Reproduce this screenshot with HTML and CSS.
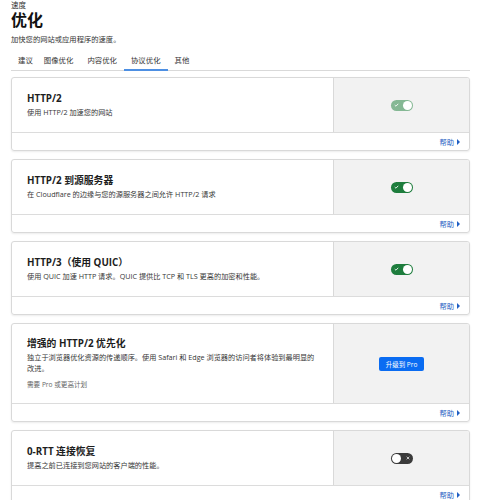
FILE: index.html
```html
<!DOCTYPE html>
<html lang="zh-CN">
  <head>
    <meta charset="utf-8">
    <title>优化</title>
    <link rel="stylesheet" href="styles.css">
  </head>
  <body>
    <header class="page-head">
      <div class="crumb">速度</div>
      <h1>优化</h1>
      <p class="lead">加快您的网站或应用程序的速度。</p>
    </header>

    <nav class="tabs">
      <a class="tab">建议</a>
      <a class="tab">图像优化</a>
      <a class="tab">内容优化</a>
      <a class="tab active">协议优化</a>
      <a class="tab">其他</a>
    </nav>

    <section class="card">
      <div class="card-main">
        <div class="card-text">
          <h2>HTTP/2</h2>
          <p>使用 HTTP/2 加速您的网站</p>
        </div>
        <div class="card-control">
          <span class="toggle on disabled">
            <svg class="tick" viewBox="0 0 6 5"><path d="M0.8 2.6 L2.3 4 L5.2 1" /></svg>
            <span class="knob"></span>
          </span>
        </div>
      </div>
      <div class="card-foot"><a class="help">帮助</a></div>
    </section>

    <section class="card">
      <div class="card-main">
        <div class="card-text">
          <h2>HTTP/2 到源服务器</h2>
          <p>在 Cloudflare 的边缘与您的源服务器之间允许 HTTP/2 请求</p>
        </div>
        <div class="card-control">
          <span class="toggle on">
            <svg class="tick" viewBox="0 0 6 5"><path d="M0.8 2.6 L2.3 4 L5.2 1" /></svg>
            <span class="knob"></span>
          </span>
        </div>
      </div>
      <div class="card-foot"><a class="help">帮助</a></div>
    </section>

    <section class="card">
      <div class="card-main">
        <div class="card-text">
          <h2>HTTP/3（使用 QUIC）</h2>
          <p>使用 QUIC 加速 HTTP 请求。QUIC 提供比 TCP 和 TLS 更高的加密和性能。</p>
        </div>
        <div class="card-control">
          <span class="toggle on">
            <svg class="tick" viewBox="0 0 6 5"><path d="M0.8 2.6 L2.3 4 L5.2 1" /></svg>
            <span class="knob"></span>
          </span>
        </div>
      </div>
      <div class="card-foot"><a class="help">帮助</a></div>
    </section>

    <section class="card">
      <div class="card-main">
        <div class="card-text">
          <h2>增强的 HTTP/2 优先化</h2>
          <p>独立于浏览器优化资源的传递顺序。使用 Safari 和 Edge 浏览器的访问者将体验到最明显的改进。</p>
          <p class="note">需要 Pro 或更高计划</p>
        </div>
        <div class="card-control">
          <button class="upgrade">升级到 Pro</button>
        </div>
      </div>
      <div class="card-foot"><a class="help">帮助</a></div>
    </section>

    <section class="card">
      <div class="card-main">
        <div class="card-text">
          <h2>0-RTT 连接恢复</h2>
          <p>提高之前已连接到您网站的客户端的性能。</p>
        </div>
        <div class="card-control">
          <span class="toggle off">
            <span class="knob"></span>
            <svg class="cross" viewBox="0 0 6 6"><path d="M1 1 L5 5 M5 1 L1 5" /></svg>
          </span>
        </div>
      </div>
      <div class="card-foot"><a class="help">帮助</a></div>
    </section>
  </body>
</html>
```

FILE: styles.css
```css
body {
  margin: 0;
  padding: 0 9px 20px 11px;
  background-color: #fff;
  color: #222;
  font-family: "Open Sans", "Noto Sans CJK SC", sans-serif;
}

.crumb {
  font-size: 7.5px;
  line-height: 10px;
  color: #333;
}

h1 {
  margin: 0;
  font-size: 16px;
  line-height: 20px;
  font-weight: 700;
  color: #111;
}

.lead {
  margin: 4px 0 0;
  font-size: 7.3px;
  line-height: 10px;
  color: #333;
}

.tabs {
  display: flex;
  margin-top: 6px;
  border-bottom: 1px solid #d9d9d9;
}

.tab {
  padding: 5px 7px 4px;
  font-size: 7.4px;
  line-height: 10px;
  color: #333;
  border-bottom: 2px solid transparent;
  margin-bottom: -1px;
}

.tab.active {
  border-bottom-color: #4d8fe3;
}

.tabs .tab:first-child {
  margin-right: -3px;
}

.card {
  margin-top: 6px;
  margin-bottom: 8px;
  border: 1px solid #d9d9d9;
  border-radius: 3px;
  box-shadow: 0 1px 2px rgba(0, 0, 0, 0.08);
  overflow: hidden;
}

.card-main {
  display: grid;
  grid-template-columns: 1fr 136px;
  min-height: 54px;
}

.card-text {
  padding: 13px 15px;
  align-self: center;
}

.card-text h2 {
  margin: 0;
  font-size: 9.8px;
  line-height: 13px;
  font-weight: 700;
  color: #1d1d1d;
}

.card-text p {
  margin: 2px 0 0;
  font-size: 7.2px;
  line-height: 11px;
  color: #363636;
}

.card-text p.note {
  margin-top: 6px;
  font-size: 6.6px;
  line-height: 10px;
  color: #666;
}

.card-control {
  display: flex;
  align-items: center;
  justify-content: center;
  background-color: #f2f2f2;
  border-left: 1px solid #d9d9d9;
}

.card-foot {
  display: flex;
  justify-content: flex-end;
  height: 17px;
  border-top: 1px solid #dcdcdc;
  padding-right: 9px;
}

.help {
  display: flex;
  align-items: center;
  font-size: 7.3px;
  color: #1f5fc4;
}

.help::after {
  content: "";
  margin-left: 3px;
  border-left: 3.5px solid #1f5fc4;
  border-top: 3px solid transparent;
  border-bottom: 3px solid transparent;
}

.toggle {
  display: flex;
  align-items: center;
  justify-content: space-between;
  width: 22px;
  height: 11px;
  padding: 0 1px 0 3px;
  box-sizing: border-box;
  border-radius: 6px;
}

.toggle.on {
  background-color: #1e7d3d;
}

.toggle.on.disabled {
  background-color: #85b894;
}

.toggle.off {
  background-color: #3b3b3b;
  padding: 0 3px 0 1px;
}

.knob {
  width: 9px;
  height: 9px;
  border-radius: 50%;
  background-color: #fff;
}

.tick {
  width: 5px;
  height: 4px;
  fill: none;
  stroke: #fff;
  stroke-width: 1.1;
}

.cross {
  width: 4px;
  height: 4px;
  fill: none;
  stroke: #ddd;
  stroke-width: 1.3;
}

.upgrade {
  padding: 0;
  width: 45px;
  height: 14px;
  border: none;
  border-radius: 2px;
  background-color: #0a6cf2;
  color: #fff;
  font-family: "Open Sans", "Noto Sans CJK SC", sans-serif;
  font-size: 6.5px;
}
```
